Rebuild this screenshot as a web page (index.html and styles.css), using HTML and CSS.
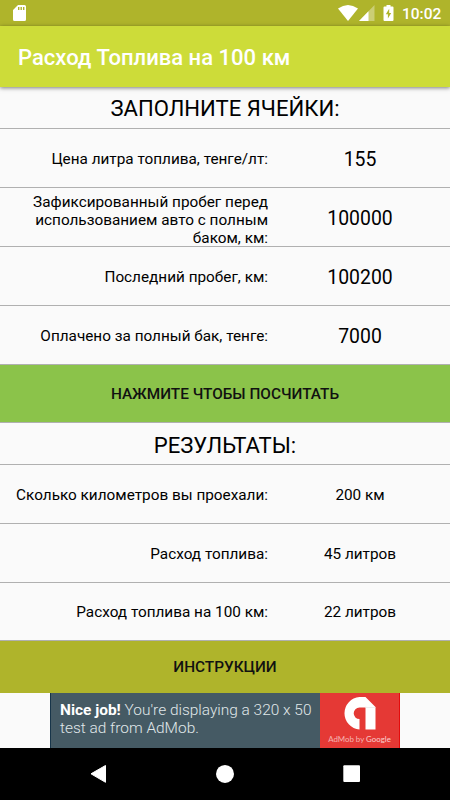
FILE: index.html
```html
<!DOCTYPE html>
<html lang="ru">
<head>
<meta charset="utf-8">
<title>Расход Топлива на 100 км</title>
<link rel="stylesheet" href="styles.css">
</head>
<body>
<div class="screen">
  <div class="status">
    <svg class="sd" width="13" height="16" viewBox="0 0 13 16"><path fill="#fff" fill-rule="evenodd" d="M5 0h6.500q1.500 0 1.500 1.500v13q0 1.500-1.500 1.500h-10Q0 16 0 14.500V5zM5 2v3h1.400V2zM7.500 2v3h1.400V2zM10 2v3h1.400V2z"/></svg>
    <svg class="wifi" width="20" height="16" viewBox="0 0 20 16"><path fill="#fff" d="M0 3.600Q10-3.600 20 3.600L10 16z"/></svg>
    <svg class="cell" width="16" height="16" viewBox="0 0 16 16"><path fill="#fff" fill-opacity=".35" d="M15.500 0v16H0z"/><path fill="#fff" d="M9.500 6.200V16H0z"/></svg>
    <svg class="battery" width="11" height="16" viewBox="0 0 11 16"><path fill="#fff" fill-rule="evenodd" d="M3.500 0h4v1.500h2q1 0 1 1V15q0 1-1 1h-8q-1 0-1-1V2.500q0-1 1-1h2zM6.200 3.700L2.800 9.300h2.100v4.300l3.300-5.700H6.200z"/></svg>
    <span class="clock">10:02</span>
  </div>
  <header class="appbar"><h1>Расход Топлива на 100 км</h1></header>
  <main>
    <h2 class="heading">ЗАПОЛНИТЕ ЯЧЕЙКИ:</h2>
    <div class="row"><div class="label">Цена литра топлива, тенге/лт:</div><div class="value">155</div></div>
    <div class="row"><div class="label tall">Зафиксированный пробег перед<br>использованием авто с полным<br>баком, км:</div><div class="value">100000</div></div>
    <div class="row"><div class="label">Последний пробег, км:</div><div class="value">100200</div></div>
    <div class="row"><div class="label">Оплачено за полный бак, тенге:</div><div class="value">7000</div></div>
    <button class="calc">НАЖМИТЕ ЧТОБЫ ПОСЧИТАТЬ</button>
    <h2 class="heading results">РЕЗУЛЬТАТЫ:</h2>
    <div class="row"><div class="label">Сколько километров вы проехали:</div><div class="value small">200 км</div></div>
    <div class="row"><div class="label">Расход топлива:</div><div class="value small">45 литров</div></div>
    <div class="row last"><div class="label">Расход топлива на 100 км:</div><div class="value small">22 литров</div></div>
    <button class="help">ИНСТРУКЦИИ</button>
  </main>
  <div class="banner">
    <div class="ad">
      <div class="copy"><b>Nice job!</b> You're displaying a 320 x 50<br>test ad from AdMob.</div>
      <div class="brand">
        <svg width="33" height="33" viewBox="0 0 33 33"><path fill="#fff" d="M16.500 0H22.500l10 10V32.500H22.500V10.500h-6a5.800 5.800 0 0 0 0 11.600V32.500A16.300 16.300 0 0 1 16.500 0z"/><path fill="#ddd" d="M22.500 10.500v-1l1 .500h9v.500z"/></svg>
        <div class="by">AdMob by <span class="google">Google</span></div>
      </div>
    </div>
  </div>
  <nav class="nav">
    <svg width="450" height="52" viewBox="0 0 450 52"><g fill="#fff"><path stroke="#fff" stroke-linejoin="round" d="M91 25.800L105.500 17.500v16.800z"/><circle cx="225" cy="25.900" r="9"/><rect x="343.300" y="17.300" width="16.700" height="16.700" rx="1"/></g></svg>
  </nav>
</div>
</body>
</html>
```
FILE: styles.css
```css
* { box-sizing: border-box; }
body { margin: 0; background: #fafafa; font-family: Roboto, "Liberation Sans", sans-serif; color: #000; }
svg { display: block; flex: none; }
.screen { width: 450px; height: 800px; display: flex; flex-direction: column; overflow: hidden; }
.status { height: 26px; flex: none; background: #afb42b; display: flex; align-items: center; padding: 0 8px 0 13px; color: #fff; }
.wifi { margin-left: auto; }
.cell { margin-left: 1px; }
.battery { margin-left: 8px; }
.clock { width: 40px; margin-left: 8px; font-size: 15.500px; font-weight: 500; line-height: 20px; padding-top: 1px; }
.appbar { height: 61px; flex: none; background: #cddc39; display: flex; align-items: center; padding: 2px 18px 0; box-shadow: 0 1px 4px rgba(0,0,0,.5); position: relative; }
h1 { margin: 0; font-size: 22.050px; font-weight: 500; color: #fff; }
main { flex: none; height: 606px; display: flex; flex-direction: column; }
.heading { margin: 0; height: 42px; flex: none; border-bottom: 1px solid #b0b0b0; font-size: 22.100px; font-weight: 400; line-height: 42px; text-align: center; }
.results { line-height: 45px; }
.row { height: 59px; flex: none; display: grid; grid-template-columns: 268px 184px; align-items: center; border-bottom: 1px solid #b0b0b0; }
.last { height: 58px; }
.label { text-align: right; font-size: 15.320px; line-height: 18px; padding-top: 2px; }
.tall { padding-top: 5px; }
.value { text-align: center; font-size: 19.400px; padding-top: 2px; }
.small { font-size: 15.300px; }
.last .label, .last .value { padding-top: 0; }
button { border: 0; margin: 0; padding: 1px 0 0; width: 100%; font: 500 15.350px Roboto, sans-serif; color: #111; flex: none; }
.calc { height: 58px; background: #8bc34a; border-bottom: 1px solid #b0b0b0; }
.help { height: 52px; background: #afb42b; padding: 0; }
.banner { height: 55px; flex: none; display: flex; justify-content: center; }
.ad { width: 350px; display: flex; border-left: 1px solid #173549; }
.copy { width: 269px; background: #455a64; color: #e0e8ea; font-size: 15.450px; font-weight: 300; line-height: 18px; padding: 8px 0 0 9px; white-space: nowrap; }
.copy b { color: #fff; font-weight: 700; }
.brand { width: 80px; background: #e53935; display: flex; flex-direction: column; align-items: center; padding-top: 4px; border-right: 1px solid #e50b0b; }
.by { font: 7.900px/10px Lato, sans-serif; color: #f6b5b2; margin-top: 4px; white-space: nowrap; }
.google { color: #fbd0ce; }
.nav { height: 52px; flex: none; background: #000; }
```
